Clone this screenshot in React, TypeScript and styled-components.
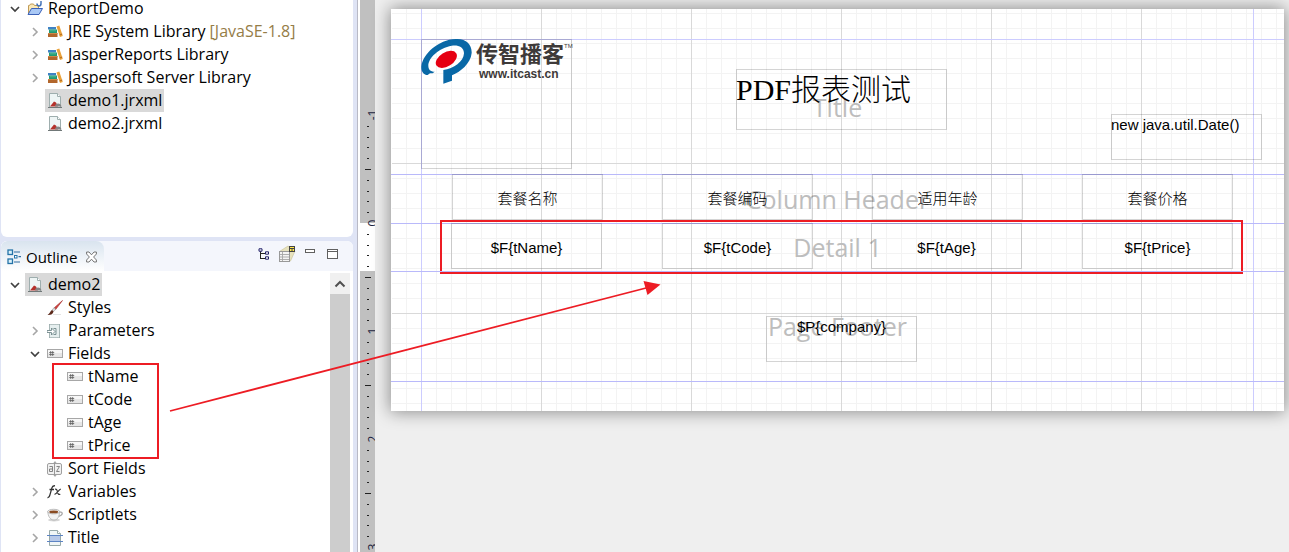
import React from "react";
import styled, { createGlobalStyle } from "styled-components";

const UI_FONT = `"Open Sans", "Noto Sans", "Noto Sans CJK SC", sans-serif`;
const RED = "#ed1c24";

const GlobalStyle = createGlobalStyle`
  *, *::before, *::after { box-sizing: border-box; }
  body { margin: 0; background: #efefef; font-family: ${UI_FONT}; color: #000; }
  button { font: inherit; color: inherit; background: none; border: 0; padding: 0; margin: 0; text-align: left; }
  svg { display: block; flex: none; }
`;

/* ---------- shell ---------- */

const Workbench = styled.div`
  position: relative;
  display: flex;
  min-height: 100vh;
  overflow: hidden;
`;

const Sidebar = styled.div`
  display: flex;
  flex-direction: column;
  flex: 0 0 358px;
  gap: 4px;
  padding: 0 4px 0 1px;
  background: #dfe4f5;
  border-right: 1px solid #b9bac6;
`;

const ExplorerPanel = styled.nav`
  height: 237px;
  background: #fff;
  border-radius: 0 0 6px 6px;
  overflow: hidden;
`;

const OutlinePanel = styled.section`
  display: flex;
  flex-direction: column;
  flex: 1;
  background: #fff;
  border-radius: 6px 6px 0 0;
  overflow: hidden;
`;

const TabBar = styled.header`
  display: flex;
  justify-content: space-between;
  height: 30px;
  background: #f4f6fc;
`;

const Tab = styled.div`
  display: flex;
  align-items: center;
  gap: 5px;
  width: 103px;
  padding: 2px 0 0 6px;
  border-radius: 6px 8px 0 0;
  background: linear-gradient(#d9e4ef, #fff);
`;

const TabTitle = styled.h2`
  flex: 1;
  margin: 0;
  font-size: 15px;
  font-weight: 400;
`;

const TabClose = styled.button`
  margin-right: 7px;
`;

const Toolbar = styled.div`
  display: flex;
  padding-right: 9px;
`;

const ToolButton = styled.button`
  display: flex;
  justify-content: center;
  align-items: center;
  width: 23px;
  height: 26px;
`;

const OutlineBody = styled.div`
  display: flex;
  flex: 1;
  padding: 2px 3px 0 0;
`;

const ScrollTrack = styled.div`
  display: flex;
  flex-direction: column;
  width: 20px;
  background: #f0f0f0;
`;

const ScrollUp = styled.button`
  display: flex;
  align-items: center;
  justify-content: center;
  height: 21px;
`;

const ScrollThumb = styled.div`
  flex: 1;
  background: #cdcdcd;
`;

/* ---------- tree ---------- */

const TreeList = styled.ul<{ $scrolled?: boolean }>`
  flex: 1;
  margin: ${(p) => (p.$scrolled ? "-3px 0 0" : "0")};
  padding: 0;
  list-style: none;
`;

const TreeRow = styled.li<{ $level: number }>`
  display: flex;
  height: 23px;
  padding-left: ${(p) => 6 + p.$level * 20}px;
`;

const Toggle = styled.button`
  display: flex;
  align-items: center;
  justify-content: center;
  width: 16px;
`;

const ToggleSpace = styled.span`
  width: 16px;
`;

const NodeLabel = styled.button<{ $selected?: boolean }>`
  display: flex;
  align-items: center;
  gap: 5px;
  margin-left: 2px;
  padding: 0 2px;
  font-size: 16px;
  line-height: 23px;
  white-space: pre;
  background: ${(p) => (p.$selected ? "#d9d9d9" : "transparent")};
`;

const Decoration = styled.span`
  color: #957d47;
`;

/* ---------- editor ---------- */

const Editor = styled.main`
  display: flex;
  flex: 1;
  min-width: 0;
  padding-left: 2px;
  background: linear-gradient(to right, #fff 2px, #efefef 2px);
`;

const RulerStrip = styled.div`
  flex: none;
  width: 15px;
  background: linear-gradient(#c0c0c0 223px, #fff 223px, #fff 271px, #c0c0c0 271px);
`;

const Viewport = styled.div`
  flex: 1;
  min-width: 0;
  padding: 9px 5px 0 16px;
`;

const Sheet = styled.article`
  padding-top: 30px;
  background:
    linear-gradient(#fff, #fff) 0 0 / 1px 100% no-repeat,
    linear-gradient(#ccccff, #ccccff) left 30px top / 1px 100% no-repeat,
    linear-gradient(#ccccff, #ccccff) right 30px top / 1px 100% no-repeat,
    linear-gradient(to right, #d9d9d9 1px, transparent 1px) 0 0 / 150px 100%,
    linear-gradient(transparent 154px, #d9d9d9 154px, #d9d9d9 155px, transparent 155px, transparent 304px, #d9d9d9 304px, #d9d9d9 305px, transparent 305px),
    linear-gradient(to right, #f3f3f3 1px, transparent 1px) 0 0 / 15px 100%,
    linear-gradient(#f3f3f3 1px, transparent 1px) 0 4px / 100% 15px,
    #fff;
  box-shadow: 0 0 16px 1px rgba(0, 0, 0, 0.42);
`;

const Band = styled.section<{ $height: number; $edge?: string }>`
  position: relative;
  display: flex;
  align-items: center;
  justify-content: center;
  height: ${(p) => p.$height}px;
  box-shadow: inset 0 1px ${(p) => p.$edge ?? "#b9b9fa"};
`;

const BandName = styled.span`
  color: #bdbdbd;
  font-size: 25px;
  line-height: 32px;
`;

const Element = styled.div<{ $x: number; $y?: number; $w?: number; $h?: number; $middle?: boolean; $align?: string }>`
  position: absolute;
  left: ${(p) => p.$x}px;
  top: ${(p) => p.$y ?? 0}px;
  width: ${(p) => p.$w ?? 151}px;
  height: ${(p) => p.$h ?? 46}px;
  display: flex;
  align-items: ${(p) => (p.$middle ? "center" : "flex-start")};
  justify-content: ${(p) => p.$align ?? "center"};
  padding-top: ${(p) => (p.$middle ? 3 : 0)}px;
  box-shadow: inset 0 0 0 1px rgba(0, 0, 0, 0.17);
`;

const Expression = styled.span`
  font-family: "Liberation Sans", "Noto Sans CJK SC", sans-serif;
  font-size: 15px;
  line-height: 22px;
  white-space: nowrap;
`;

const HeaderText = styled.span`
  font-family: "Liberation Serif", "Noto Sans CJK SC", serif;
  font-size: 15px;
  font-weight: 300;
  line-height: 20px;
`;

const ReportTitle = styled.h1`
  margin: 0;
  font-family: "Liberation Serif", "Noto Sans CJK SC", serif;
  font-size: 30px;
  font-weight: 300;
  line-height: 42px;
  white-space: nowrap;
`;

const Brand = styled.div`
  display: flex;
  gap: 4px;
  color: #3e3a39;
  white-space: nowrap;
`;

const BrandText = styled.div`
  display: flex;
  flex-direction: column;
`;

const BrandName = styled.span`
  display: flex;
  font: 700 22px/27px "Noto Sans CJK SC", sans-serif;
`;

const Trademark = styled.span`
  font: 400 6px/14px "Liberation Sans", sans-serif;
`;

const BrandUrl = styled.span`
  padding-left: 3px;
  font: 700 12px/16px "Liberation Sans", sans-serif;
`;

/* ---------- annotations ---------- */

const FieldsMark = styled.div`
  position: absolute;
  left: 52px;
  top: 363px;
  width: 107px;
  height: 96px;
  border: 2px solid ${RED};
  pointer-events: none;
`;

const DetailMark = styled.div`
  position: absolute;
  left: 49px;
  right: 41px;
  top: -3px;
  bottom: -3px;
  border: 2px solid ${RED};
  pointer-events: none;
`;

const ArrowLayer = styled.svg`
  position: absolute;
  left: 0;
  top: 0;
  pointer-events: none;
`;

/* ---------- icons ---------- */

const Icon = ({ children, w = 16, h = 16 }: { children: React.ReactNode; w?: number; h?: number }) => (
  <svg width={w} height={h} viewBox={`0 0 ${w} ${h}`} aria-hidden="true">
    {children}
  </svg>
);

const ChevronDown = () => (
  <Icon w={10} h={10}>
    <path d="M1 3l4 4 4-4" fill="none" stroke="#404040" strokeWidth="1.7" />
  </Icon>
);
const ChevronRight = () => (
  <Icon w={10} h={10}>
    <path d="M3 1l4 4-4 4" fill="none" stroke="#a6a6a6" strokeWidth="1.6" />
  </Icon>
);
const ProjectIcon = () => (
  <Icon>
    <path d="M1.500 13V4.500h1l1-1.500h3l1 1.500h4V8" fill="#fbe9b6" stroke="#c09a56" />
    <path d="M1 13.500L4.500 7.500h11L12 13.500z" fill="#a9c8f5" stroke="#3c62b8" />
    <path d="M10 2.500q0 2.500 2 2.500t2-2.500V0" fill="none" stroke="#4674b8" strokeWidth="1.5" />
  </Icon>
);
const LibraryIcon = () => (
  <Icon>
    <path d="M1 3h8v2.500H1z" fill="#3f82c4" />
    <path d="M2 5.500h8V9H2z" fill="#1f9a74" />
    <path d="M3 6.800h6" stroke="#5fc09c" strokeWidth=".8" />
    <path d="M1 9h9.500v4H1z" fill="#b2662c" />
    <path d="M1 9h9.500v1H1z" fill="#d08748" />
    <path d="M9.500 2.500l2.800-1L15.800 12 13 13z" fill="#e9a23b" />
    <path d="M12.700 11l2.500-.9" stroke="#b26a1d" />
  </Icon>
);
const ReportIcon = () => (
  <Icon>
    <path d="M2.500.5h8l3 3v11h-11z" fill="#eef5f5" stroke="#9eaeae" />
    <path d="M10.500.5v3h3" fill="#fff" stroke="#9eaeae" />
    <path d="M3 13.500L7 8.500l2 1 2 4z" fill="#b5322c" />
    <path d="M8 13.500c0-4 6-4 6.500 0z" fill="#868686" />
    <path d="M1 14.500h14" stroke="#707878" />
  </Icon>
);
const StylesIcon = () => (
  <Icon>
    <path d="M15.500.5L7 8l1.500 1.700z" fill="#d04540" stroke="#a32a28" strokeWidth=".6" />
    <path d="M7.200 7.500L5 10l1.500 1.500 2.200-2z" fill="#d9d9d9" stroke="#888" strokeWidth=".5" />
    <path d="M5 10c-2 1-1.500 3-4.500 5 3.500.2 5.500-1 6-3.500z" fill="#5d2a1c" />
    <path d="M6 14.500h8" stroke="#e4e4e4" />
  </Icon>
);
const ParametersIcon = () => (
  <Icon>
    <path d="M2.500 1l1 1 1-1 1 1 1-1 1 1 1-1 1 1 1-1 1 1 1-1v14l-1-1-1 1-1-1-1 1-1-1-1 1-1-1-1 1-1-1-1 1z" fill="#e6efef" stroke="#92a5a5" strokeWidth=".8" />
    <path d="M0 7.500h4.500V5L8 8.500 4.500 12V9.500H0z" fill="#fff" stroke="#71888a" strokeWidth=".9" />
    <path d="M6.500 5.500H9v6H6.500" fill="none" stroke="#71888a" strokeWidth=".9" />
  </Icon>
);
const FieldIcon = () => (
  <Icon>
    <rect x=".5" y="3.500" width="15" height="8" fill="#e6e6e6" stroke="#a7a7a7" />
    <path d="M1 4h14v3H1z" fill="#f7f7f7" />
    <path d="M3.700 5v5M5.700 5v5M2.200 6.500h5M2.200 8.500h5" stroke="#606060" strokeWidth=".8" />
  </Icon>
);
const SortIcon = () => (
  <Icon>
    <path d="M8 0l2 2.500H6zM8 16l2-2.500H6z" fill="#aaa" />
    <rect x=".5" y="2.500" width="14" height="11" rx="1.500" fill="#f1f1f1" stroke="#a0a0a0" />
    <path d="M7.500 1.500v13" stroke="#989898" />
    <path d="M2.500 5.500h3v5h-3v-2.500h3M9.500 5.500h3l-3 5h3" fill="none" stroke="#777" strokeWidth=".9" />
  </Icon>
);
const VariablesIcon = () => (
  <Icon>
    <path d="M.5 13.500c1.500.3 2-.8 2.500-2.800L4.900 3.800C5.400 2 6.200 1.500 8 1.800M2.500 5.500H7" fill="none" stroke="#333" strokeWidth="1.300" />
    <path d="M8 5.300c1.500-.5 2 .5 2.500 2.500s1 3.200 2.800 2.400M13.800 5.100c-2 0-3.700 5.200-6.300 5.200" fill="none" stroke="#333" strokeWidth="1.200" />
  </Icon>
);
const ScriptletsIcon = () => (
  <Icon>
    <path d="M11 5.500c5-1.500 6 2 .5 4" fill="none" stroke="#aaa" strokeWidth="1.300" />
    <ellipse cx="7" cy="13" rx="6" ry="1.500" fill="#d5d5d5" />
    <path d="M.8 4.500C1 9 3 13 7 13s5.500-4 5.600-8.500z" fill="#f3f3f3" stroke="#a5a5a5" strokeWidth=".7" />
    <ellipse cx="6.700" cy="4.600" rx="6" ry="2.300" fill="#f8f8f8" stroke="#a0a0a0" strokeWidth=".7" />
    <ellipse cx="6.700" cy="4.900" rx="4.500" ry="1.400" fill="#8a4b22" />
  </Icon>
);
const BandIcon = () => (
  <Icon>
    <path d="M2.500.5h8l3 3v12h-11z" fill="#f0f6f6" stroke="#97a9a9" />
    <path d="M10.500.5v3h3" fill="#fff" stroke="#97a9a9" />
    <rect x="3" y="6" width="10" height="5" fill="#b7c9e8" />
    <path d="M0 5.500h16M0 11.500h16" stroke="#5d84c4" />
  </Icon>
);
const OutlineIcon = () => (
  <Icon w={14}>
    <rect x="1" y="1" width="4.500" height="4.500" fill="#d9f0fa" stroke="#2473a8" strokeWidth="1.300" />
    <rect x="1" y="10" width="4.500" height="4.500" fill="#d9f0fa" stroke="#2473a8" strokeWidth="1.300" />
    <rect x="7.500" y="6.500" width="2.500" height="2.500" fill="#fff" stroke="#2473a8" />
    <path d="M7 3h6M11.500 7.700H14M7 13h6" stroke="#2f6da0" strokeWidth="1.200" />
  </Icon>
);
const CloseIcon = () => (
  <Icon w={11} h={12}>
    <path d="M.6 1h2.400l2.500 2.800L8 1h2.400v2L7.600 6l2.800 3v2H8L5.500 8.200 3 11H.6V9l2.800-3L.6 3z" fill="#fff" stroke="#666" strokeWidth=".9" />
  </Icon>
);
const TreeModeIcon = () => (
  <Icon w={12} h={12}>
    <path d="M2.500 3v8M2.500 5.500H7M2.500 10.500H7" fill="none" stroke="#222" />
    <path d="M1 .8h3v2.400H1zM7.500 3.800h3v2.400h-3zM7.500 8.800h3v2.400h-3z" fill="#fff" stroke="#20206a" />
  </Icon>
);
const PreviewIcon = () => (
  <Icon w={18} h={18}>
    <path d="M1.500 6.500L10 1l7 5-4.500 10z" fill="#e7e2bd" stroke="#c6bf94" strokeWidth=".6" />
    <rect x="1.500" y="6.500" width="10" height="10" fill="#f4f4f4" stroke="#999" />
    <path d="M2 9.500h9M2 12h9M2 14.500h9M4.500 7v9" stroke="#a6a6a6" strokeWidth=".9" />
    <rect x="11.500" y="1.500" width="5" height="5" fill="#ffe84a" stroke="#444" />
    <path d="M11.500 3.500h5M14 3.500v3" stroke="#444" />
  </Icon>
);
const MinimizeIcon = () => (
  <Icon w={10} h={12}>
    <rect x=".5" y="1.500" width="9" height="3" fill="#fff" stroke="#606060" />
  </Icon>
);
const MaximizeIcon = () => (
  <Icon w={11} h={10}>
    <rect x=".5" y=".5" width="10" height="9" fill="#fff" stroke="#606060" />
    <path d="M.5 2.500h10" stroke="#606060" />
  </Icon>
);
const ScrollUpIcon = () => (
  <Icon w={12} h={10}>
    <path d="M1.500 7.500L6 3l4.500 4.500" fill="none" stroke="#505050" strokeWidth="2" />
  </Icon>
);

const LogoMark = () => (
  <svg width="51" height="45" viewBox="0 0 153 135" aria-hidden="true">
    <path
      d="M20 108C8 108 0 98 1 82C5 45 52 2 104 0C135-1 153 16 152 42C149 74 118 99 93 109L93 125L67 134L67 93C98 89 128 68 129 43C129 23 110 17 92 20C54 27 22 56 22 80C22 91 28 98 41 98L35 103L27 103z"
      fill="#0968a6"
    />
    <ellipse cx="76" cy="61" rx="35" ry="21" transform="rotate(-32 76 61)" fill="#e60012" />
  </svg>
);

/* ---------- ruler ---------- */

const ORIGIN = 223;
const TICK = 10.8;
const ticks = Array.from({ length: 40 }, (_, i) => i - 9).filter((i) => i % 10 !== 0);
const inches = [-1, 0, 1, 2, 3];

const VerticalRuler = () => (
  <RulerStrip>
    <svg width="15" height="552" aria-hidden="true">
      {ticks.map((i) => {
        const half = i % 5 === 0;
        return (
          <rect key={i} x={half ? 5 : 7} y={Math.round(ORIGIN + i * TICK)} width={half ? 6 : 2} height="1" fill="#222" />
        );
      })}
      {inches.map((n) => (
        <text
          key={n}
          transform={`translate(17 ${ORIGIN + n * 108}) rotate(-90)`}
          textAnchor="middle"
          fontFamily={UI_FONT}
          fontSize="12"
          fill="#1c2440"
        >
          {n}
        </text>
      ))}
    </svg>
  </RulerStrip>
);

/* ---------- data ---------- */

type Node = {
  label: string;
  level: number;
  icon: React.ComponentType;
  state?: "open" | "closed";
  selected?: boolean;
  note?: string;
};

const projectNodes: Node[] = [
  { label: "ReportDemo", level: 0, icon: ProjectIcon, state: "open" },
  { label: "JRE System Library", level: 1, icon: LibraryIcon, state: "closed", note: " [JavaSE-1.8]" },
  { label: "JasperReports Library", level: 1, icon: LibraryIcon, state: "closed" },
  { label: "Jaspersoft Server Library", level: 1, icon: LibraryIcon, state: "closed" },
  { label: "demo1.jrxml", level: 1, icon: ReportIcon, selected: true },
  { label: "demo2.jrxml", level: 1, icon: ReportIcon },
];

const outlineNodes: Node[] = [
  { label: "demo2", level: 0, icon: ReportIcon, state: "open", selected: true },
  { label: "Styles", level: 1, icon: StylesIcon },
  { label: "Parameters", level: 1, icon: ParametersIcon, state: "closed" },
  { label: "Fields", level: 1, icon: FieldIcon, state: "open" },
  { label: "tName", level: 2, icon: FieldIcon },
  { label: "tCode", level: 2, icon: FieldIcon },
  { label: "tAge", level: 2, icon: FieldIcon },
  { label: "tPrice", level: 2, icon: FieldIcon },
  { label: "Sort Fields", level: 1, icon: SortIcon },
  { label: "Variables", level: 1, icon: VariablesIcon, state: "closed" },
  { label: "Scriptlets", level: 1, icon: ScriptletsIcon, state: "closed" },
  { label: "Title", level: 1, icon: BandIcon, state: "closed" },
];

const headers = [
  { x: 61, text: "套餐名称" },
  { x: 271, text: "套餐编码" },
  { x: 481, text: "适用年龄" },
  { x: 691, text: "套餐价格" },
];

const details = [
  { x: 60, text: "$F{tName}" },
  { x: 271, text: "$F{tCode}" },
  { x: 480, text: "$F{tAge}" },
  { x: 691, text: "$F{tPrice}" },
];

const Tree = ({ nodes, scrolled }: { nodes: Node[]; scrolled?: boolean }) => (
  <TreeList $scrolled={scrolled}>
    {nodes.map((n) => (
      <TreeRow key={n.label} $level={n.level}>
        {n.state ? (
          <Toggle type="button" aria-label={`Toggle ${n.label}`} aria-expanded={n.state === "open"}>
            {n.state === "open" ? <ChevronDown /> : <ChevronRight />}
          </Toggle>
        ) : (
          <ToggleSpace />
        )}
        <NodeLabel type="button" $selected={n.selected}>
          <n.icon />
          <span>
            {n.label}
            {n.note && <Decoration>{n.note}</Decoration>}
          </span>
        </NodeLabel>
      </TreeRow>
    ))}
  </TreeList>
);

export default function App() {
  return (
    <>
      <GlobalStyle />
      <Workbench>
        <Sidebar>
          <ExplorerPanel aria-label="Project explorer">
            <Tree nodes={projectNodes} scrolled />
          </ExplorerPanel>
          <OutlinePanel>
            <TabBar>
              <Tab>
                <OutlineIcon />
                <TabTitle>Outline</TabTitle>
                <TabClose type="button" aria-label="Close"><CloseIcon /></TabClose>
              </Tab>
              <Toolbar>
                <ToolButton type="button" aria-label="Outline tree"><TreeModeIcon /></ToolButton>
                <ToolButton type="button" aria-label="Overview"><PreviewIcon /></ToolButton>
                <ToolButton type="button" aria-label="Minimize"><MinimizeIcon /></ToolButton>
                <ToolButton type="button" aria-label="Maximize"><MaximizeIcon /></ToolButton>
              </Toolbar>
            </TabBar>
            <OutlineBody>
              <Tree nodes={outlineNodes} />
              <ScrollTrack>
                <ScrollUp type="button" aria-label="Scroll up"><ScrollUpIcon /></ScrollUp>
                <ScrollThumb />
              </ScrollTrack>
            </OutlineBody>
          </OutlinePanel>
        </Sidebar>

        <Editor>
          <VerticalRuler />
          <Viewport>
            <Sheet>
              <Band $height={135} $edge="#ccccff">
                <BandName>Title</BandName>
                <Element $x={30} $h={130} $align="flex-start">
                  <Brand>
                    <LogoMark />
                    <BrandText>
                      <BrandName>传智播客<Trademark>TM</Trademark></BrandName>
                      <BrandUrl>www.itcast.cn</BrandUrl>
                    </BrandText>
                  </Brand>
                </Element>
                <Element $x={345} $y={30} $w={211} $h={61} $align="flex-start">
                  <ReportTitle>PDF报表测试</ReportTitle>
                </Element>
                <Element $x={720} $y={75} $align="flex-start">
                  <Expression>new java.util.Date()</Expression>
                </Element>
              </Band>
              <Band $height={49}>
                <BandName>Column Header</BandName>
                {headers.map((h) => (
                  <Element key={h.text} $x={h.x} $middle>
                    <HeaderText>{h.text}</HeaderText>
                  </Element>
                ))}
              </Band>
              <Band $height={48}>
                <BandName>Detail 1</BandName>
                {details.map((d) => (
                  <Element key={d.text} $x={d.x} $middle>
                    <Expression>{d.text}</Expression>
                  </Element>
                ))}
                <DetailMark />
              </Band>
              <Band $height={110}>
                <BandName>Page Footer</BandName>
                <Element $x={375} $y={45}>
                  <Expression>{"$P{company}"}</Expression>
                </Element>
              </Band>
              <Band $height={30} />
            </Sheet>
          </Viewport>
        </Editor>

        <FieldsMark />
        <ArrowLayer width="670" height="430" aria-hidden="true">
          <path d="M170 411L648 287.500" stroke={RED} strokeWidth="1.800" />
          <path d="M643.500 281L660.500 284.500L647.500 295z" fill={RED} />
        </ArrowLayer>
      </Workbench>
    </>
  );
}
